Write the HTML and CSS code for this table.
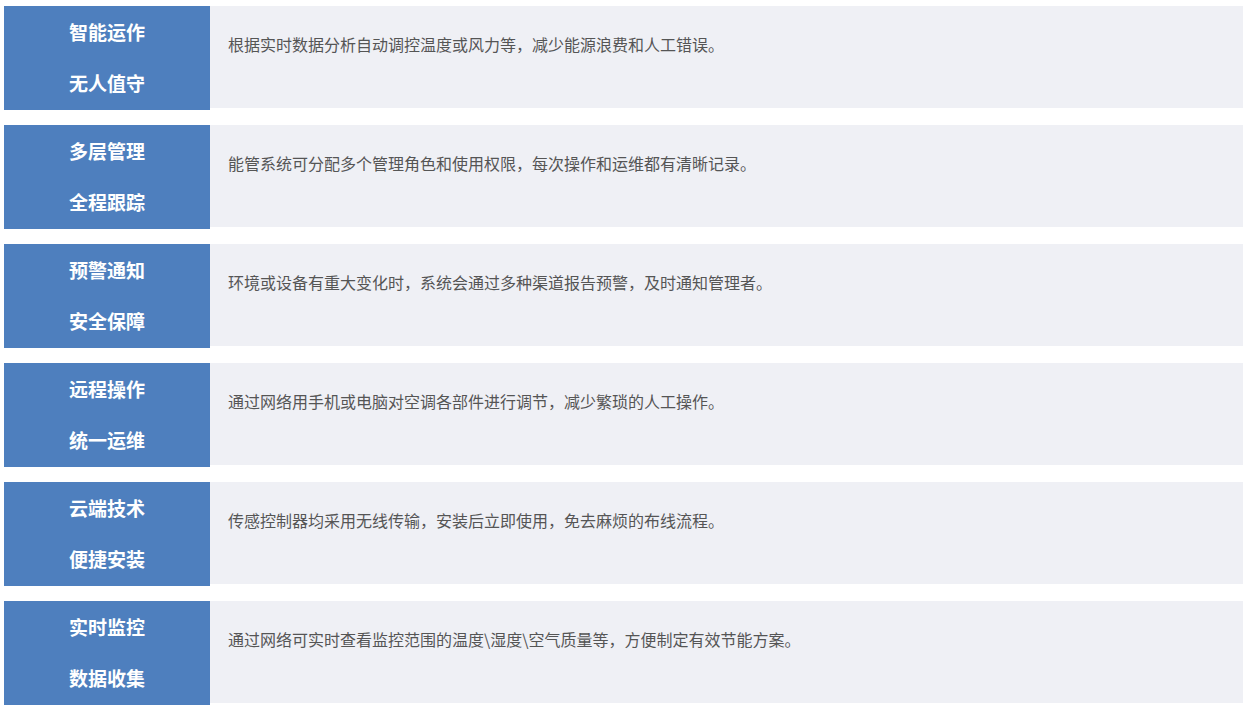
FILE: index.html
```html
<!DOCTYPE html>
<html lang="zh-CN">
  <head>
    <meta charset="UTF-8" />
    <meta name="viewport" content="width=device-width, initial-scale=1.0" />
    <title>产品优势</title>
    <link rel="stylesheet" href="styles.css">
  </head>
  <body>
    <div class="feature-list">
      <div class="feature-row">
        <div class="feature-title"><p>智能运作</p><p>无人值守</p></div>
        <div class="feature-desc">根据实时数据分析自动调控温度或风力等，减少能源浪费和人工错误。</div>
      </div>
      <div class="feature-row">
        <div class="feature-title"><p>多层管理</p><p>全程跟踪</p></div>
        <div class="feature-desc">能管系统可分配多个管理角色和使用权限，每次操作和运维都有清晰记录。</div>
      </div>
      <div class="feature-row">
        <div class="feature-title"><p>预警通知</p><p>安全保障</p></div>
        <div class="feature-desc">环境或设备有重大变化时，系统会通过多种渠道报告预警，及时通知管理者。</div>
      </div>
      <div class="feature-row">
        <div class="feature-title"><p>远程操作</p><p>统一运维</p></div>
        <div class="feature-desc">通过网络用手机或电脑对空调各部件进行调节，减少繁琐的人工操作。</div>
      </div>
      <div class="feature-row">
        <div class="feature-title"><p>云端技术</p><p>便捷安装</p></div>
        <div class="feature-desc">传感控制器均采用无线传输，安装后立即使用，免去麻烦的布线流程。</div>
      </div>
      <div class="feature-row">
        <div class="feature-title"><p>实时监控</p><p>数据收集</p></div>
        <div class="feature-desc">通过网络可实时查看监控范围的温度\湿度\空气质量等，方便制定有效节能方案。</div>
      </div>
    </div>
  </body>
</html>
```

FILE: styles.css
```css
body {
  margin: 0;
  padding: 6px 8px 0 4px;
  background: #fff;
  font-family: "Microsoft YaHei", "Noto Sans CJK SC", "Noto Sans", sans-serif;
}

.feature-list {
  display: flex;
  flex-direction: column;
  gap: 15px;
}

.feature-row {
  display: flex;
  align-items: flex-start;
}

.feature-title {
  width: 206px;
  height: 104px;
  flex-shrink: 0;
  box-sizing: border-box;
  padding-bottom: 2px;
  background: #4e7fbe;
  color: #fff;
  display: flex;
  flex-direction: column;
  align-items: center;
}

.feature-title p {
  margin: 0;
  height: 51px;
  line-height: 51px;
  font-size: 19px;
  font-weight: bold;
}

.feature-desc {
  flex: 1;
  height: 102px;
  box-sizing: border-box;
  padding: 26px 18px;
  background: #eff0f5;
  color: #555;
  font-size: 16px;
  line-height: 24px;
}
```
